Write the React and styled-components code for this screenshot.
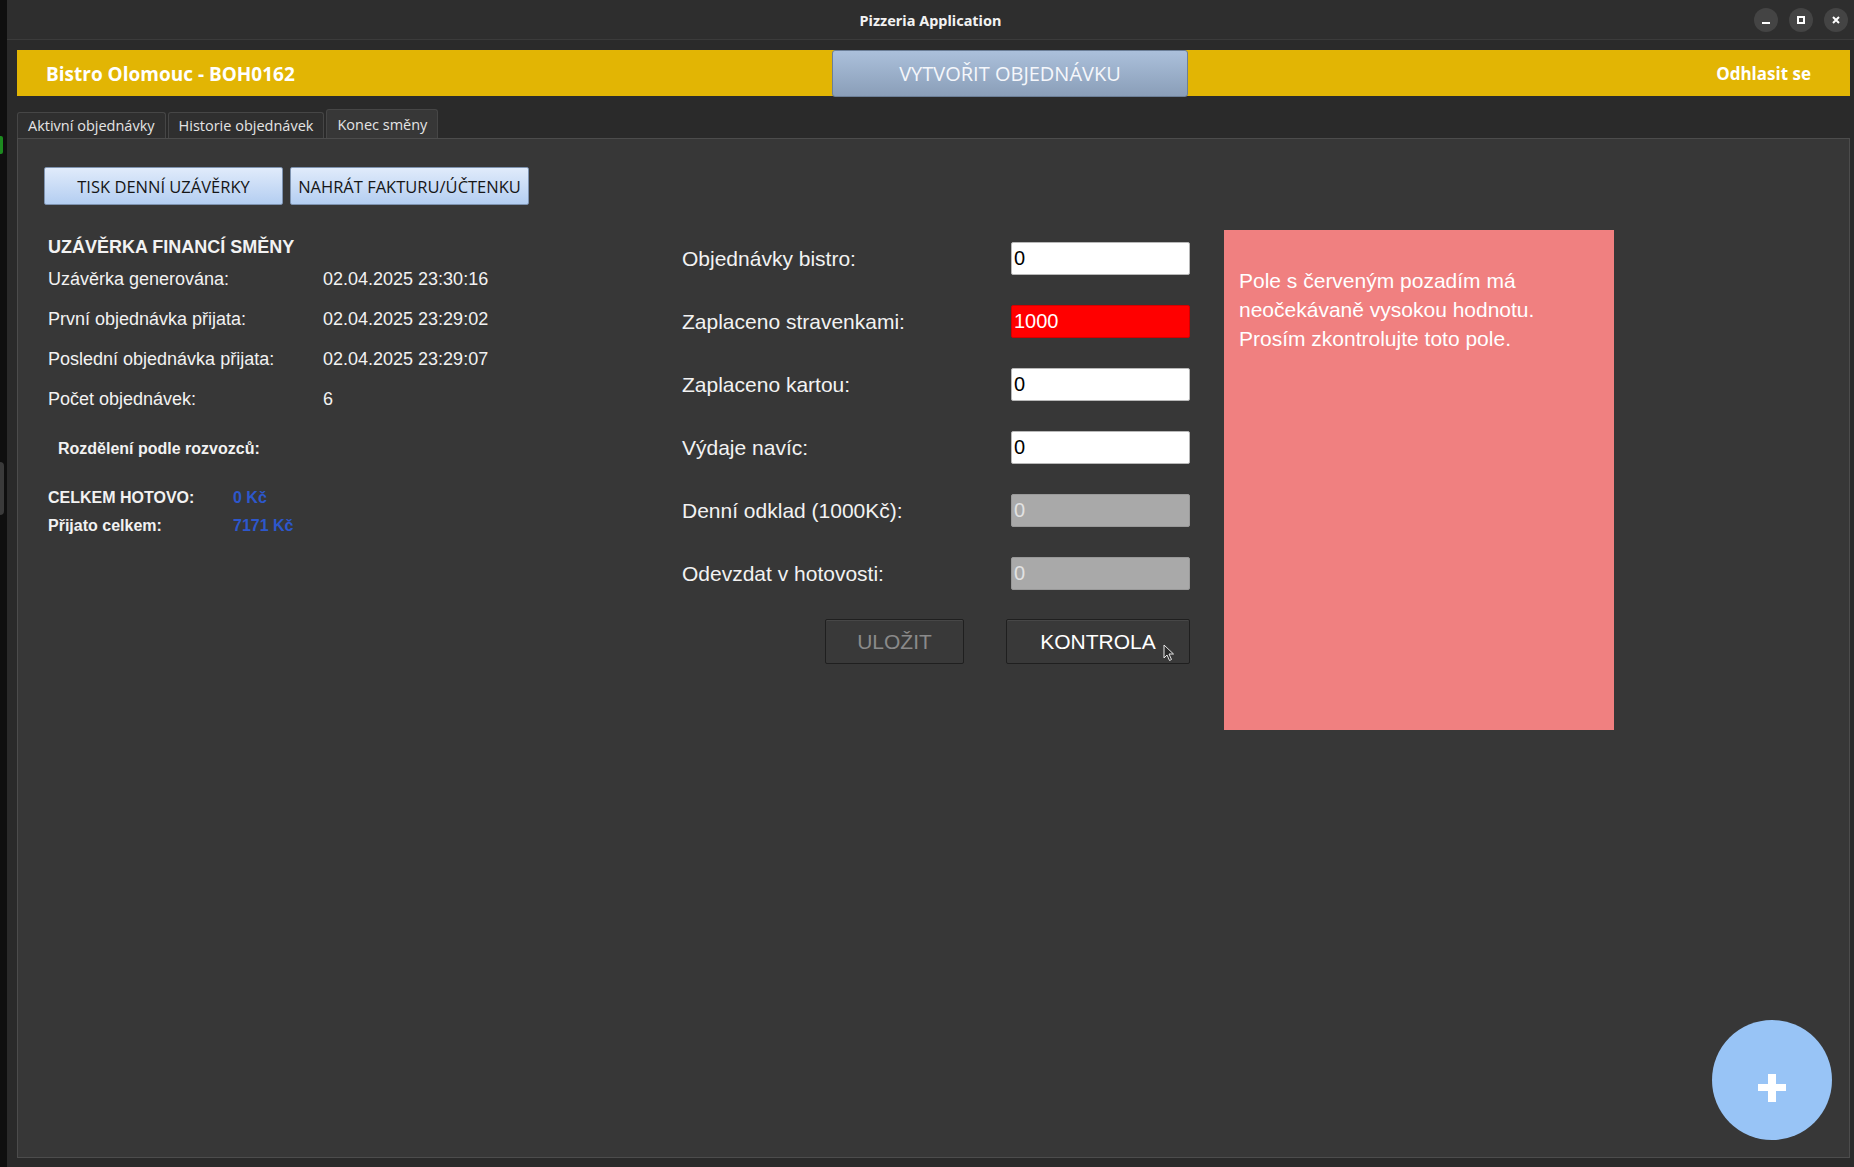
import styled, { createGlobalStyle } from "styled-components";

const GlobalStyle = createGlobalStyle`
  html, body {
    margin: 0;
    padding: 0;
    background: #0f0f0f;
  }
  body {
    font-family: "Liberation Sans", Arial, sans-serif;
  }
  * {
    box-sizing: border-box;
  }
`;

const infoRows = [
  { label: "Uzávěrka generována:", value: "02.04.2025 23:30:16" },
  { label: "První objednávka přijata:", value: "02.04.2025 23:29:02" },
  { label: "Poslední objednávka přijata:", value: "02.04.2025 23:29:07" },
  { label: "Počet objednávek:", value: "6" },
];

const formRows = [
  { label: "Objednávky bistro:", value: "0", kind: "normal" },
  { label: "Zaplaceno stravenkami:", value: "1000", kind: "alert" },
  { label: "Zaplaceno kartou:", value: "0", kind: "normal" },
  { label: "Výdaje navíc:", value: "0", kind: "normal" },
  { label: "Denní odklad (1000Kč):", value: "0", kind: "disabled" },
  { label: "Odevzdat v hotovosti:", value: "0", kind: "disabled" },
];

const App = () => {
  return (
    <>
      <GlobalStyle />
      <Screen>
        <DesktopEdge>
          <GreenMark />
          <GrayMark />
        </DesktopEdge>
        <Window>
          <TitleBar>
            <span />
            <WindowTitle>Pizzeria Application</WindowTitle>
            <WindowControls>
              <WindowButton>
                <svg width="10" height="10" viewBox="0 0 10 10">
                  <rect x="1" y="7" width="8" height="2" fill="#fff" />
                </svg>
              </WindowButton>
              <WindowButton>
                <svg width="10" height="10" viewBox="0 0 10 10">
                  <rect x="2" y="2" width="6" height="6" fill="none" stroke="#fff" strokeWidth="2" />
                </svg>
              </WindowButton>
              <WindowButton>
                <svg width="10" height="10" viewBox="0 0 10 10">
                  <path d="M2 2 L8 8 M8 2 L2 8" stroke="#fff" strokeWidth="2" />
                </svg>
              </WindowButton>
            </WindowControls>
          </TitleBar>

          <WindowBody>
            <Header>
              <Brand>Bistro Olomouc - BOH0162</Brand>
              <CreateOrderButton>VYTVOŘIT OBJEDNÁVKU</CreateOrderButton>
              <Logout>Odhlasit se</Logout>
            </Header>

            <TabBar>
              <Tab>Aktivní objednávky</Tab>
              <Tab>Historie objednávek</Tab>
              <Tab active>Konec směny</Tab>
            </TabBar>

            <Pane>
              <Toolbar>
                <LightButton>TISK DENNÍ UZÁVĚRKY</LightButton>
                <LightButton>NAHRÁT FAKTURU/ÚČTENKU</LightButton>
              </Toolbar>

              <Content>
                <InfoColumn>
                  <InfoTitle>UZÁVĚRKA FINANCÍ SMĚNY</InfoTitle>
                  {infoRows.map((row) => (
                    <InfoRow key={row.label}>
                      <InfoLabel>{row.label}</InfoLabel>
                      <span>{row.value}</span>
                    </InfoRow>
                  ))}
                  <SplitTitle>Rozdělení podle rozvozců:</SplitTitle>
                  <TotalRow first>
                    <TotalLabel>CELKEM HOTOVO:</TotalLabel>
                    <TotalValue>0 Kč</TotalValue>
                  </TotalRow>
                  <TotalRow>
                    <TotalLabel>Přijato celkem:</TotalLabel>
                    <TotalValue>7171 Kč</TotalValue>
                  </TotalRow>
                </InfoColumn>

                <FormColumn>
                  {formRows.map((row) => (
                    <FormRow key={row.label}>
                      <FormLabel>{row.label}</FormLabel>
                      <ValueBox kind={row.kind}>{row.value}</ValueBox>
                    </FormRow>
                  ))}
                  <ActionRow>
                    <ActionButton disabled>ULOŽIT</ActionButton>
                    <ActionButton wide>
                      KONTROLA
                      <Cursor width="12" height="18" viewBox="0 0 12 18">
                        <path
                          d="M1 1 L1 14 L4 11 L6.5 16.5 L8.5 15.5 L6 10 L10.5 10 Z"
                          fill="#2a2a2a"
                          stroke="#e8e8e8"
                          strokeWidth="1"
                          strokeLinejoin="round"
                        />
                      </Cursor>
                    </ActionButton>
                  </ActionRow>
                </FormColumn>

                <WarningPanel>
                  Pole s červeným pozadím má neočekávaně vysokou hodnotu.
                  Prosím zkontrolujte toto pole.
                </WarningPanel>
              </Content>

              <Fab>
                <svg width="28" height="28" viewBox="0 0 28 28">
                  <rect x="10" y="0" width="8" height="28" fill="#fff" />
                  <rect x="0" y="10" width="28" height="7" fill="#fff" />
                </svg>
              </Fab>
            </Pane>
          </WindowBody>
        </Window>
      </Screen>
    </>
  );
};

const Screen = styled.div`
  display: flex;
  width: 1854px;
  height: 1167px;
  overflow: hidden;
`;

const DesktopEdge = styled.div`
  width: 7px;
  flex-shrink: 0;
  background: #0f0f0f;
  display: flex;
  flex-direction: column;
`;

const GreenMark = styled.div`
  width: 3px;
  height: 18px;
  margin-top: 136px;
  background: #1c8a1f;
  border-radius: 0 2px 2px 0;
`;

const GrayMark = styled.div`
  width: 4px;
  height: 53px;
  margin-top: 308px;
  background: #3a3a3a;
  border-radius: 0 4px 4px 0;
`;

const Window = styled.div`
  flex: 1;
  display: flex;
  flex-direction: column;
  background: #2a2a2a;
`;

const TitleBar = styled.div`
  height: 40px;
  flex-shrink: 0;
  display: grid;
  grid-template-columns: 1fr auto 1fr;
  align-items: center;
  background: #2e2e2e;
  border-bottom: 1px solid #3b3b3b;
`;

const WindowTitle = styled.div`
  font-family: "Noto Sans", "Open Sans", sans-serif;
  font-weight: 700;
  font-size: 14.5px;
  color: #f2f2f2;
`;

const WindowControls = styled.div`
  justify-self: end;
  display: flex;
  gap: 11px;
  padding-right: 6px;
`;

const WindowButton = styled.div`
  width: 24px;
  height: 24px;
  border-radius: 50%;
  background: #444444;
  display: flex;
  align-items: center;
  justify-content: center;
`;

const WindowBody = styled.div`
  flex: 1;
  display: flex;
  flex-direction: column;
  padding: 10px 4px 9px 10px;
`;

const Header = styled.div`
  height: 46px;
  flex-shrink: 0;
  display: grid;
  grid-template-columns: 815px 356px 1fr;
  align-items: center;
  background: #e2b504;
`;

const Brand = styled.div`
  padding-left: 29px;
  font-family: "Open Sans", "Noto Sans", sans-serif;
  font-weight: 700;
  font-size: 19px;
  color: #ffffff;
`;

const CreateOrderButton = styled.div`
  height: 47px;
  display: flex;
  align-items: center;
  justify-content: center;
  background: linear-gradient(#abc0db, #8a9eb8);
  border: 1px solid #6c7f98;
  border-radius: 3px;
  font-family: "Open Sans", "Noto Sans", sans-serif;
  font-size: 20px;
  color: #f5f7fb;
`;

const Logout = styled.div`
  justify-self: end;
  padding-right: 39px;
  font-family: "Open Sans", "Noto Sans", sans-serif;
  font-weight: 700;
  font-size: 17px;
  color: #ffffff;
`;

const TabBar = styled.div`
  display: flex;
  align-items: flex-end;
  gap: 2px;
  margin-top: 13px;
`;

const Tab = styled.div`
  height: ${(p) => (p.active ? "29px" : "26px")};
  padding: 0 10px;
  display: flex;
  align-items: center;
  background: ${(p) => (p.active ? "#373737" : "#2f2f2f")};
  border: 1px solid #464646;
  border-bottom: none;
  border-radius: 3px 3px 0 0;
  font-family: "Open Sans", "Noto Sans", sans-serif;
  font-size: 14.5px;
  color: #e4e4e4;
`;

const Pane = styled.div`
  flex: 1;
  position: relative;
  background: #373737;
  border: 1px solid #4c4c4c;
  padding: 28px 0 0 26px;
`;

const Toolbar = styled.div`
  display: flex;
  gap: 7px;
`;

const LightButton = styled.div`
  width: 239px;
  height: 38px;
  display: flex;
  align-items: center;
  justify-content: center;
  background: linear-gradient(#e0ebfb, #b4cef1);
  border: 1px solid #7e93b0;
  border-radius: 2px;
  font-family: "Open Sans", "Noto Sans", sans-serif;
  font-size: 16.5px;
  color: #161616;
`;

const Content = styled.div`
  display: flex;
  margin-top: 25px;
`;

const InfoColumn = styled.div`
  width: 638px;
  padding-left: 4px;
  padding-top: 6px;
  color: #f2f2f2;
  font-size: 18px;
`;

const InfoTitle = styled.div`
  height: 22px;
  line-height: 22px;
  font-weight: 700;
  font-size: 18px;
  margin-bottom: 1px;
`;

const InfoRow = styled.div`
  height: 40px;
  display: flex;
  align-items: center;
`;

const InfoLabel = styled.span`
  width: 275px;
`;

const SplitTitle = styled.div`
  margin-top: 20px;
  padding-left: 10px;
  line-height: 20px;
  font-weight: 700;
  font-size: 16px;
`;

const TotalRow = styled.div`
  display: flex;
  margin-top: ${(p) => (p.first ? "29px" : "8px")};
  line-height: 20px;
  font-weight: 700;
  font-size: 16px;
`;

const TotalLabel = styled.span`
  width: 185px;
`;

const TotalValue = styled.span`
  color: #2d57cc;
`;

const FormColumn = styled.div`
  width: 508px;
  padding-top: 12px;
  display: flex;
  flex-direction: column;
  gap: 30px;
`;

const FormRow = styled.div`
  height: 33px;
  display: flex;
  align-items: center;
  justify-content: space-between;
`;

const FormLabel = styled.span`
  font-size: 21px;
  color: #f2f2f2;
`;

const boxColors = {
  normal: { bg: "#ffffff", fg: "#000000", border: "#b8b8b8" },
  alert: { bg: "#ff0000", fg: "#ffffff", border: "#d40000" },
  disabled: { bg: "#a9a9a9", fg: "#e2e2e2", border: "#999999" },
};

const ValueBox = styled.div`
  width: 179px;
  height: 33px;
  display: flex;
  align-items: center;
  padding-left: 2px;
  background: ${(p) => boxColors[p.kind].bg};
  color: ${(p) => boxColors[p.kind].fg};
  border: 1px solid ${(p) => boxColors[p.kind].border};
  border-radius: 2px;
  font-size: 20px;
`;

const ActionRow = styled.div`
  display: flex;
  justify-content: flex-end;
  gap: 42px;
  margin-top: -1px;
`;

const ActionButton = styled.div`
  position: relative;
  width: ${(p) => (p.wide ? "184px" : "139px")};
  height: 45px;
  display: flex;
  align-items: center;
  justify-content: center;
  background: #393939;
  border: 1px solid #1f1f1f;
  box-shadow: inset 0 1px 0 #474747;
  border-radius: 2px;
  font-size: 21px;
  color: ${(p) => (p.disabled ? "#8a8a8a" : "#ffffff")};
`;

const Cursor = styled.svg`
  position: absolute;
  left: 156px;
  top: 24px;
`;

const WarningPanel = styled.div`
  width: 390px;
  height: 500px;
  margin-left: 34px;
  padding: 36px 40px 0 15px;
  background: #f08080;
  color: #ffffff;
  font-size: 21px;
  line-height: 29px;
`;

const Fab = styled.div`
  position: absolute;
  right: 17px;
  bottom: 17px;
  width: 120px;
  height: 120px;
  border-radius: 50%;
  background: #98c4f6;
  display: flex;
  align-items: center;
  justify-content: center;
  padding-top: 16px;
`;

export default App;
